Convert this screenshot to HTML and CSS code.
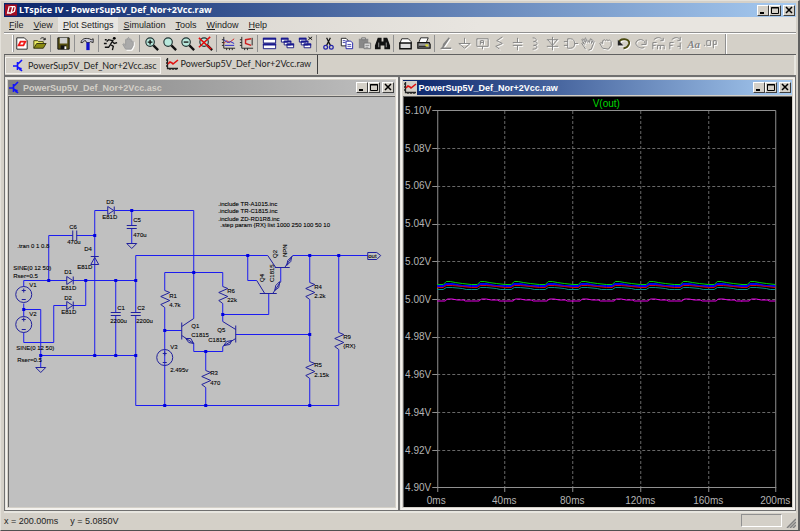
FILE: index.html
```html
<!DOCTYPE html>
<html lang="en">
<head>
<meta charset="utf-8">
<title>LTspice IV - PowerSup5V_Def_Nor+2Vcc.raw</title>
<link rel="stylesheet" href="styles.css">
</head>
<body>
<svg class="defs" aria-hidden="true">
  <defs>
    <symbol id="min" viewBox="0 0 10 9"><path d="M2 7h4" stroke="#000" stroke-width="2"/></symbol>
    <symbol id="max" viewBox="0 0 10 9"><path d="M1.5 1.5h7v6h-7zM1 2h8" fill="none" stroke="#000"/></symbol>
    <symbol id="close" viewBox="0 0 10 9"><path d="M2 1l6 6M8 1L2 7" stroke="#000" stroke-width="1.5"/></symbol>
    <symbol id="sch" viewBox="0 0 14 14"><path d="M1 7h4M5.500 3v8M6 5l4-4M6 8l4 4" fill="none" stroke="#11f" stroke-width="1.600"/><path d="M6 8l4 1-2 3z" fill="#11f"/></symbol>
    <symbol id="wave" viewBox="0 0 14 14"><path d="M2.500 1v10.500H13M1 3h1M1 6h1M1 9h1M5 12v1M8 12v1M11 12v1" fill="none" stroke="#222" stroke-width="1.300"/><path d="M3 7l2-2 2 1 1 1 5-4" fill="none" stroke="#e01010" stroke-width="1.600"/></symbol>
    <symbol id="lens" viewBox="0 0 18 18"><circle cx="7.500" cy="7.500" r="4.500" fill="#b8e8dc" stroke="#233" stroke-width="1.200"/><path d="M11 11l5 5" stroke="#111" stroke-width="2.400"/></symbol>
    <symbol id="hand" viewBox="0 0 18 18"><path d="M6 15l-3-5 1-1 2 2V5l1-1 1 1V3.500l1-1 1 1V5l1-1 1 1v2l1-1 1 1v4l-2 4z"/></symbol>
    <g id="dot"><rect x="-1" y="-1" width="3" height="3" fill="#0000e0"/></g>
    <path id="res" d="M0 0l5 2-9 4 9 4-9 4 4 3"/>
    <path id="diode" d="M0-4v8l6-4zM6.500-4v8"/>
    <path id="gnd" d="M-5 0H5L0 5z"/>
    <g id="cycle" fill="none">
      <path stroke="#0000f0" stroke-width="2" d="M0 286H6L9 284 15 284 25 286 34 286"/>
      <path stroke="#00d000" d="M0 284.500H6L9 281.500 13 281.500 18 282.500 25 283.500 34 284.500"/>
      <path stroke="#d80000" d="M0 287.500H6L9 285.500 15 285.500 25 286.500 34 287.500"/>
      <path stroke="#009090" d="M0 289.500H6L9 287.500 15 287.500 25 288.500 29 289.500 34 289.500"/>
      <path stroke="#e800e8" d="M0 301H8L10 299 15 299 20 300 26 300 28 301 34 301"/>
    </g>
  </defs>
</svg>
<div class="app">
  <header class="titlebar">
    <svg class="logo" viewBox="0 0 14 13"><path d="M0 0h14v13H0z" fill="#a50d22"/><path d="M5 2L3 10h3M6 2.500h6M9 3L7 10l4-2 1-5" fill="none" stroke="#fff" stroke-width="1.500"/></svg>
    <h1>LTspice IV - PowerSup5V_Def_Nor+2Vcc.raw</h1>
    <span class="winbtns"><button aria-label="Minimize"><svg><use href="#min"/></svg></button><button aria-label="Maximize"><svg><use href="#max"/></svg></button><button class="x" aria-label="Close"><svg><use href="#close"/></svg></button></span>
  </header>
  <nav class="menu">
    <button><u>F</u>ile</button><button><u>V</u>iew</button><button class="hot"><u>P</u>lot Settings</button><button><u>S</u>imulation</button><button><u>T</u>ools</button><button><u>W</u>indow</button><button><u>H</u>elp</button>
  </nav>
  <div class="toolbar">
    <div class="group n2">
      <button aria-label="New schematic"><svg viewBox="0 0 18 18"><path d="M4 3h8l3 3v9H4z" fill="#fff" stroke="#222"/><path d="M6 11l2-4h5l-2 4z" fill="none" stroke="#f01818" stroke-width="2"/></svg></button>
      <button aria-label="Open"><svg viewBox="0 0 18 18"><path d="M3 14V6h4l1 1h5v2" fill="#ee6" stroke="#441"/><path d="M3 14l3-5h10l-3 5z" fill="#8a8a10" stroke="#331"/><path d="M10 4c2-2 4-1 5 1M15 3v2h-2" fill="none" stroke="#111"/></svg></button>
    </div>
    <div class="group n1"><button aria-label="Save"><svg viewBox="0 0 18 18"><path d="M3 3h12v12H3z" fill="#564f10" stroke="#111"/><path d="M5 3h8v6H5z" fill="#ccc"/><path d="M6 11h6v4H6z" fill="#111"/><path d="M10 12h2v3h-2z" fill="#fff"/></svg></button></div>
    <div class="group n1"><button aria-label="Control panel"><svg viewBox="0 0 18 18"><path d="M2 8c1-4 4-5 9-4l2 1 2-1v4l-3-1-1 1H8L7 6C5 6 4 7 4 8z" fill="#ccd" stroke="#222"/><path d="M9.500 8v8" stroke="#11c" stroke-width="3.500"/></svg></button></div>
    <div class="group n2">
      <button aria-label="Run"><svg viewBox="0 0 18 18"><circle cx="13" cy="3.500" r="1.500"/><path d="M12 5l-3 5M11 6L7 5 5 7M11 7l2 2 3-1M9 10l3 2-1 4M9 10l-2 3H3M3 5h2M2 9h3" fill="none" stroke="#111" stroke-width="1.400"/></svg></button>
      <button aria-label="Halt"><svg class="solid"><use href="#hand"/></svg></button>
    </div>
    <div class="group n4">
      <button aria-label="Zoom in"><svg viewBox="0 0 18 18"><use href="#lens"/><path d="M5 7.500h5M7.500 5v5" stroke="#111" stroke-width="1.400"/></svg></button>
      <button aria-label="Pan"><svg viewBox="0 0 18 18"><use href="#lens"/></svg></button>
      <button aria-label="Zoom out"><svg viewBox="0 0 18 18"><use href="#lens"/><path d="M5 7.500h5" stroke="#111" stroke-width="1.400"/></svg></button>
      <button aria-label="Zoom to fit"><svg viewBox="0 0 18 18"><use href="#lens"/><path d="M2 3l13 12M14 2L2 13" stroke="#e01010" stroke-width="1.600"/></svg></button>
    </div>
    <div class="group n2">
      <button aria-label="Autorange"><svg viewBox="0 0 18 18"><path d="M4 2v12h12M2 5h2M2 8h2M2 11h2M7 14v2M10 14v2M13 14v2" fill="none" stroke="#222"/><path d="M4 9l3-3 3 2 5-4" fill="none" stroke="#d02020"/><path d="M4 5l4 3 3-1 4 2M5 11h10" fill="none" stroke="#2424c8"/></svg></button>
      <button aria-label="Plot limits"><svg viewBox="0 0 18 18"><path d="M4 2v12h12M2 5h2M2 8h2M2 11h2M7 14v2M10 14v2M15 3v8" fill="none" stroke="#222"/><path d="M14 4L8 5v4l6 2" fill="none" stroke="#d02020" stroke-width="1.500"/></svg></button>
    </div>
    <div class="group n3">
      <button aria-label="Tile"><svg viewBox="0 0 18 18"><path d="M2.500 3.500h13v5h-13zM2.500 9.500h13v5h-13z" fill="#fff" stroke="#1a1a80"/><path d="M2 4h14M2 10h14" stroke="#1a1a90" stroke-width="2"/></svg></button>
      <button aria-label="Cascade"><svg viewBox="0 0 18 18"><path d="M2.500 3.500h7v4h-7zM5.500 6.500h7v4h-7zM8.500 9.500h7v4h-7z" fill="#fff" stroke="#1a1a80"/><path d="M2 4h8M5 7h8M8 10h8" stroke="#1a1a90" stroke-width="2"/></svg></button>
      <button aria-label="Close all"><svg viewBox="0 0 18 18"><path d="M2.500 3.500h7v4h-7zM4.500 6.500h7v4h-7zM7.500 9.500h7v4h-7z" fill="#fff" stroke="#1a1a80"/><path d="M2 4h8M4 7h8M7 10h8" stroke="#1a1a90" stroke-width="2"/><path d="M12 2l4 3M16 2l-4 3" stroke="#111"/></svg></button>
    </div>
    <div class="group n4">
      <button aria-label="Cut"><svg viewBox="0 0 18 18"><path d="M7 3l4 8M11 3l-4 8" stroke="#111" stroke-width="1.300"/><circle cx="6" cy="13" r="2" fill="none" stroke="#22a" stroke-width="1.300"/><circle cx="12" cy="13" r="2" fill="none" stroke="#22a" stroke-width="1.300"/></svg></button>
      <button aria-label="Copy"><svg viewBox="0 0 18 18"><path d="M3.500 3.500h5l2 2v6h-7z" fill="#fff" stroke="#222"/><path d="M8.500 6.500h5l2 2v6h-7z" fill="#fff" stroke="#22a"/><path d="M5 6h3M5 8h3M10 10h4M10 12h4" stroke="#44a"/></svg></button>
      <button aria-label="Paste"><svg viewBox="0 0 18 18"><path d="M3 4h10v10H3z" fill="#888"/><path d="M6 3h4v2H6z" fill="#ccc" stroke="#777"/><path d="M8.500 8.500h7v6h-7z" fill="#ddd" stroke="#777"/><path d="M10 11h4M10 13h3" stroke="#888"/></svg></button>
      <button aria-label="Find"><svg viewBox="0 0 18 18"><path d="M4 3h4v4h2V3h4l3 8v4h-6v-4H7v4H1v-4z" fill="#111"/><path d="M5 8v5M13 8v5" stroke="#999"/></svg></button>
    </div>
    <div class="group n2">
      <button aria-label="Print setup"><svg viewBox="0 0 18 18"><path d="M5 4h7l3 3v2H3z" fill="#fff" stroke="#222"/><path d="M3 8.500h12v6H3z" fill="#ddd" stroke="#111" stroke-width="1.500"/></svg></button>
      <button aria-label="Print"><svg viewBox="0 0 18 18"><path d="M6 3h8l-2 5H4z" fill="#fff" stroke="#222"/><path d="M3 8h12l1 2v4H3z" fill="#999" stroke="#111" stroke-width="1.300"/><path d="M4 12h8" stroke="#111"/><path d="M11 11h3" stroke="#dd2" stroke-width="2"/></svg></button>
    </div>
    <div class="group n16 off">
      <button aria-label="Wire"><svg viewBox="0 0 18 18"><path d="M12 3L6 12l-2 2h10M5 14l1-4 6-7" stroke-width="1.500"/></svg></button>
      <button aria-label="Ground"><svg viewBox="0 0 18 18"><path d="M9 3v6M3 9h12l-6 5z"/></svg></button>
      <button aria-label="Label net"><svg viewBox="0 0 18 18"><path d="M3 4h12v8H3zM9 12v3M7 10V6h3v4M7 8h3"/></svg></button>
      <button aria-label="Resistor"><svg viewBox="0 0 18 18"><path d="M12 2L6 6l6 3-7 3 4 3"/></svg></button>
      <button aria-label="Capacitor"><svg viewBox="0 0 18 18"><path d="M9 3v5M4 8h10M4 11h10M9 11v5"/></svg></button>
      <button aria-label="Inductor"><svg viewBox="0 0 18 18"><path d="M7 3c5 0 5 4 1 4 5 0 5 4 0 4 5 0 5 4-1 4"/></svg></button>
      <button aria-label="Diode"><svg viewBox="0 0 18 18"><path d="M3 5h12M4 5l5 6 5-6M3 12h12M9 2v14"/></svg></button>
      <button aria-label="Component"><svg viewBox="0 0 18 18"><path d="M6 4v10h3c6 0 6-10 0-10zM2 7h4M2 11h4M13 9h4"/></svg></button>
      <button aria-label="Move"><svg viewBox="0 0 18 18"><path d="M7 15l-4-6 1-1 2 2-3-5 1-1 3 4-1-4 1-1 2 5M9 5l2 3 1-4 2 1-1 4 2-3 1 1-3 8-3 1"/></svg></button>
      <button aria-label="Drag"><svg viewBox="0 0 18 18"><path d="M6 14l-3-5 1-1 2 1V6l2-1 1 1 1-1 2 1 1-1 2 2v4l-3 4z"/></svg></button>
      <button aria-label="Undo"><svg viewBox="0 0 18 18"><path d="M4 9c1-7 12-5 11 0-1 3-3 5-6 5" class="undo"/><path d="M3 5v6h6z" class="head"/></svg></button>
      <button aria-label="Redo"><svg viewBox="0 0 18 18"><path d="M14 9C13 3 4 4 4 9c1 4 6 6 9 4M15 5v5h-5"/></svg></button>
      <button aria-label="Rotate"><svg viewBox="0 0 18 18"><path d="M3 15V8h4M3 11h3M8 15v-4h3v4M11 11h4v4M4 5c3-3 7-3 9 0M14 3v3h-3"/></svg></button>
      <button aria-label="Mirror"><svg viewBox="0 0 18 18"><path d="M3 15V8h4M3 11h3M14 8v7M11 12h3M5 5c3-3 7-3 9 0M14 2v4h-3"/></svg></button>
      <button aria-label="Text" class="aa">Aa</button>
      <button aria-label="SPICE directive"><svg viewBox="0 0 18 18"><path d="M4 6h4v5H4zM11 14V6h3v4h-3M1 11h1"/></svg></button>
    </div>
  </div>
  <div class="tabs">
    <button class="tab"><svg><use href="#sch"/></svg>PowerSup5V_Def_Nor+2Vcc.asc</button>
    <button class="tab on"><svg><use href="#wave"/></svg>PowerSup5V_Def_Nor+2Vcc.raw</button>
  </div>
  <main class="mdi">
    <section class="child">
      <header class="bar idle"><svg class="ico"><use href="#sch"/></svg><h2>PowerSup5V_Def_Nor+2Vcc.asc</h2>
        <span class="winbtns"><button aria-label="Minimize"><svg><use href="#min"/></svg></button><button aria-label="Maximize"><svg><use href="#max"/></svg></button><button class="x" aria-label="Close"><svg><use href="#close"/></svg></button></span></header>
      <svg class="schematic" viewBox="8 96 387 411">
        <g class="wire">
          <path transform="translate(.5 .5)" d="M48 280V235H72M76 235H94M94 355V210H107M114 210H193V318M131 210V225M131 228V243M23 286V280H66M72 280H135M23 303V316M23 309H40V367M23 332V342H53V305H66M72 305H85V280M40 355H135M115 280V312M115 315V355M135 312V255H267M135 315V405H338M247 255V280H256M164 290V272H222V286M164 307V405M222 303V321M222 314H268V293M164 330H181M193 343V351H222V346M205 351V370M205 387V405M235 334H309M309 255V282M309 299V361M309 378V405M338 255V332M338 349V405M292 255H367M280 267V281"/>
        </g>
        <g class="part" transform="translate(.5 .5)">
          <path d="M72 230V240M76 230V240M126 225H136M126 228H136M110 312H120M110 315H120M130 312H140M130 315H140"/>
          <use href="#diode" x="107" y="210"/><use href="#diode" x="66" y="280"/><use href="#diode" x="66" y="305"/>
          <path d="M90 264h8l-4-7zM90 256h8"/>
          <use href="#gnd" x="131" y="243"/><use href="#gnd" x="40" y="367"/>
          <circle cx="23" cy="294" r="8"/><circle cx="23" cy="324" r="8"/><circle cx="164" cy="357" r="8"/>
          <path d="M21 290h4M23 288v4M21 299h4M21 319h4M23 317v4M21 329h4M162 353h4M164 351v4M162 362h4"/>
          <use href="#res" x="164" y="290"/><use href="#res" x="222" y="286"/><use href="#res" x="205" y="370"/><use href="#res" x="309" y="282"/><use href="#res" x="309" y="361"/><use href="#res" x="338" y="332"/>
          <path d="M181 322V339M181 326L193 318M181 335L193 343M185 338l5 0 3 5-5-1zM235 325V342M222 321L235 329M235 338L222 346M231 340l-5 1-3 4 6-1z"/>
          <path d="M274 267H289M267 255L275 267M284 267L292 255M286 265l1-5 4-4-1 5zM259 293H276M256 280L264 293M272 293L280 281M274 290l1-5 4-4-1 6z"/>
          <path d="M367 252H376L380 255 376 259H367z"/>
        </g>
        <g><use href="#dot" x="48" y="280"/><use href="#dot" x="94" y="235"/><use href="#dot" x="131" y="210"/><use href="#dot" x="85" y="280"/><use href="#dot" x="115" y="280"/><use href="#dot" x="135" y="280"/><use href="#dot" x="23" y="309"/><use href="#dot" x="40" y="355"/><use href="#dot" x="94" y="355"/><use href="#dot" x="115" y="355"/><use href="#dot" x="135" y="355"/><use href="#dot" x="247" y="255"/><use href="#dot" x="193" y="272"/><use href="#dot" x="164" y="330"/><use href="#dot" x="222" y="314"/><use href="#dot" x="205" y="351"/><use href="#dot" x="164" y="405"/><use href="#dot" x="205" y="405"/><use href="#dot" x="309" y="405"/><use href="#dot" x="309" y="334"/><use href="#dot" x="309" y="255"/><use href="#dot" x="338" y="255"/></g>
        <g class="lbl">
          <text x="218" y="206">.include TR-A1015.inc</text><text x="218" y="213">.include TR-C1815.inc</text><text x="218" y="221">.include ZD-RD1R8.inc</text><text x="220" y="227">.step param {RX} list 1000 250 100 50 10</text>
          <text x="106" y="204">D3</text><text x="102" y="219">E81D</text><text x="69" y="229">C6</text><text x="67" y="244">470u</text><text x="133" y="222">C5</text><text x="133" y="237">470u</text><text x="84" y="251">D4</text><text x="77" y="269">E81D</text>
          <text x="17" y="248">.tran 0 1 0.8</text><text x="13" y="270">SINE(0 12 50)</text><text x="13" y="278">Rser=0.5</text><text x="29" y="287">V1</text><text x="64" y="274">D1</text><text x="61" y="290">E81D</text><text x="64" y="300">D2</text><text x="61" y="314">E81D</text><text x="29" y="316">V2</text><text x="16" y="350">SINE(0 12 50)</text><text x="17" y="362">Rser=0.5</text>
          <text x="117" y="310">C1</text><text x="110" y="323">2200u</text><text x="137" y="310">C2</text><text x="136" y="323">2200u</text><text x="169" y="298">R1</text><text x="169" y="307">4.7k</text><text x="227" y="293">R6</text><text x="227" y="302">22k</text><text x="191" y="328">Q1</text><text x="191" y="337">C1815</text><text x="217" y="332">Q5</text><text x="208" y="342">C1815</text><text x="170" y="349">V3</text><text x="170" y="372">2.495v</text><text x="210" y="375">R3</text><text x="210" y="385">470</text><text x="314" y="289">R4</text><text x="314" y="298">2.2k</text><text x="314" y="367">R5</text><text x="314" y="377">2.15k</text><text x="343" y="339">R9</text><text x="343" y="348">{RX}</text><text x="368" y="258">out</text>
          <text transform="translate(277 258) rotate(-90)">Q2</text><text transform="translate(287 257) rotate(-90)">NPN</text><text transform="translate(264 282) rotate(-90)">Q4</text><text transform="translate(274 282) rotate(-90)">C1815</text>
        </g>
      </svg>
    </section>
    <section class="child">
      <header class="bar"><svg class="ico lit"><use href="#wave"/></svg><h2>PowerSup5V_Def_Nor+2Vcc.raw</h2>
        <span class="winbtns"><button aria-label="Minimize"><svg><use href="#min"/></svg></button><button aria-label="Maximize"><svg><use href="#max"/></svg></button><button class="x" aria-label="Close"><svg><use href="#close"/></svg></button></span></header>
      <svg class="plot" viewBox="403 96 388 411">
        <path class="grid" d="M437 148.500H775M437 186.500H775M437 224.500H775M437 261.500H775M437 299.500H775M437 337.500H775M437 374.500H775M437 412.500H775M437 450.500H775M504.500 111V487M572.500 111V487M640.500 111V487M708.500 111V487"/>
        <path class="axis" d="M432 110.500H775.500V492M437.500 110V492M432 487.500H776M432 148.500h5M432 186.500h5M432 224.500h5M432 261.500h5M432 299.500h5M432 337.500h5M432 374.500h5M432 412.500h5M432 450.500h5M504.500 487v5M572.500 487v5M640.500 487v5M708.500 487v5"/>
        <g><use href="#cycle" x="437"/><use href="#cycle" x="471"/><use href="#cycle" x="505"/><use href="#cycle" x="539"/><use href="#cycle" x="572"/><use href="#cycle" x="606"/><use href="#cycle" x="640"/><use href="#cycle" x="674"/><use href="#cycle" x="708"/><use href="#cycle" x="741"/></g>
        <text class="net" x="606" y="107">V(out)</text>
        <g class="ylab"><text x="431" y="114">5.10V</text><text x="431" y="152">5.08V</text><text x="431" y="189">5.06V</text><text x="431" y="227">5.04V</text><text x="431" y="265">5.02V</text><text x="431" y="303">5.00V</text><text x="431" y="340">4.98V</text><text x="431" y="378">4.96V</text><text x="431" y="416">4.94V</text><text x="431" y="454">4.92V</text><text x="431" y="491">4.90V</text></g>
        <g class="xlab"><text x="436" y="504">0ms</text><text x="504" y="504">40ms</text><text x="572" y="504">80ms</text><text x="640" y="504">120ms</text><text x="708" y="504">160ms</text><text x="775" y="504">200ms</text></g>
      </svg>
    </section>
  </main>
  <footer class="status"><span>x = 200.00ms</span><span>y = 5.0850V</span><span class="well"></span><svg class="grip" viewBox="0 0 10 10"><path d="M1 10l9-9M4 10l6-6M7 10l3-3" stroke="#808080" stroke-width="1.500"/></svg></footer>
</div>
</body>
</html>
```

FILE: styles.css
```css
* { box-sizing: border-box; }
body { margin: 0; background: #d4d0c8; font: 9px/12px "Liberation Sans", sans-serif; color: #222; }
button { margin: 0; padding: 0; border: 0; background: none; font: inherit; color: inherit; }
svg { display: block; }
h1, h2 { margin: 0; font-size: 9px; font-weight: bold; white-space: nowrap; }
.defs { position: absolute; width: 0; height: 0; }
.app { display: flex; flex-direction: column; height: 100vh; padding: 2px 2px 2px 3px; background: #d4d0c8; border: 1px solid #e4e1da; border-width: 1px 2px 1px 1px; border-right-color: #606060; border-bottom-color: #505050; }

.titlebar { display: flex; align-items: center; flex: none; height: 14px; padding-left: 1px; background: linear-gradient(90deg, #0a246a, #a6caf0); color: #fff; }
.titlebar h1 { font-family: "Open Sans", sans-serif; }
.logo { width: 12px; height: 12px; margin-right: 2px; }
.winbtns { display: flex; margin-left: auto; padding-right: 1px; }
.winbtns button { width: 12px; height: 11px; background: #d4d0c8; border: 1px solid #fff; border-right-color: #404040; border-bottom-color: #404040; }
.winbtns svg { width: 10px; height: 9px; }
.winbtns .x { margin-left: 2px; }

.menu { display: flex; flex: none; height: 15px; background: linear-gradient(90deg, #d4d0c8, #e8e5e0 60%); }
.menu button { padding: 0 5px; }
.menu .hot { background: #e8e6e2; }
.menu u { text-underline-offset: 1px; }

.toolbar { display: flex; align-items: center; flex: none; height: 23px; padding-left: 3px; border-top: 1px solid #909090; border-bottom: 1px solid #606060; box-shadow: inset 0 1px #fff; }
.toolbar::before { content: ""; width: 5px; height: 17px; border-right: 1px solid #fff; box-shadow: 1px 0 #999; }
.group { display: grid; grid-auto-flow: column; grid-auto-columns: 1fr; align-items: center; flex: none; }
.group + .group { margin-left: 6px; box-shadow: -3px 0 #d4d0c8, -4px 0 #909090; background: #d4d0c8; }
.n1 { width: 18px; }
.n2 { width: 35px; }
.n3 { width: 53px; }
.n4 { width: 71px; }
.n16 { width: 282px; }
.toolbar svg { width: 17px; height: 17px; margin: 0 auto; overflow: visible; }
.toolbar .solid { fill: #aaa; stroke: #999; filter: drop-shadow(1px 1px #fff); }
.off svg { fill: none; stroke: #848484; stroke-width: 1; filter: drop-shadow(1px 1px #fff); }
.off .undo { stroke: #4a4a10; stroke-width: 2; }
.off .head { fill: #222; stroke: none; }
.aa { font: italic bold 11px/14px "Liberation Serif", serif; color: #848484; text-shadow: 1px 1px #fff; }
.toolbar::after { content: ""; height: 20px; margin-left: 5px; border-left: 1px solid #909090; box-shadow: inset 1px 0 #fff; width: 2px; }

.tabs { display: flex; align-items: stretch; flex: none; height: 20px; padding: 0 2px 1px 0; border-right: 2px solid #e8e6e0; border-left: 1px solid #707070; }
.tab { display: flex; align-items: center; gap: 2px; margin: 2px 0 0; padding: 0 3px 0 6px; border: 1px solid #f4f2ee; font-family: Lato, sans-serif; }
.tab svg { width: 14px; height: 14px; }
.tab.on { margin: 0; padding: 0 6px 2px 4px; border: 0; border-right: 1px solid #404040; }

.mdi { display: grid; grid-template-columns: 393fr 394fr; gap: 2px; flex: 1; min-height: 0; padding: 2px 1px 1px; background: #707070; }
.child { display: flex; flex-direction: column; min-width: 0; min-height: 0; padding: 3px; background: #d4d0c8; box-shadow: inset 1px 1px #e8e6e0, inset 2px 2px #f4f2ee, inset -2px -2px #f4f2ee; }
.bar { display: flex; align-items: center; flex: none; height: 15px; background: linear-gradient(90deg, #0a246a, #a6caf0); color: #fff; }
.bar.idle { background: linear-gradient(90deg, #808080, #c0c0c0); color: #d4d0c8; }
.ico { width: 14px; height: 14px; margin-right: 1px; }
.lit { background: #d4d0c8; }
.schematic, .plot { flex: 1; width: 100%; min-height: 0; margin-top: 1px; }
.schematic { background: #c0c0c0; box-shadow: inset 1px 1px #606060; }
.plot { background: #000; box-shadow: inset 1px 1px #606060; }
.wire { fill: none; stroke: #1c1cf0; stroke-width: 1; }
.part { fill: none; stroke: #20209c; stroke-width: 1; }
.lbl { font: 6px "Liberation Sans", sans-serif; fill: #000; stroke: #000; stroke-width: 0.1; }
.grid { fill: none; stroke: #686868; stroke-dasharray: 3 2; }
.axis { fill: none; stroke: #909090; }
.plot text { font-size: 10px; fill: #b4b4b4; text-anchor: middle; }
.plot .net { fill: #00d800; }
.plot .ylab text { text-anchor: end; }

.status { display: flex; align-items: center; gap: 12px; flex: none; height: 17px; border-top: 2px solid #e8e6e0; }
.well { width: 41px; height: 13px; margin-left: auto; border: 1px solid #909090; border-right-color: #fff; border-bottom-color: #fff; }
.grip { width: 10px; height: 10px; margin-left: -8px; align-self: flex-end; }
```
